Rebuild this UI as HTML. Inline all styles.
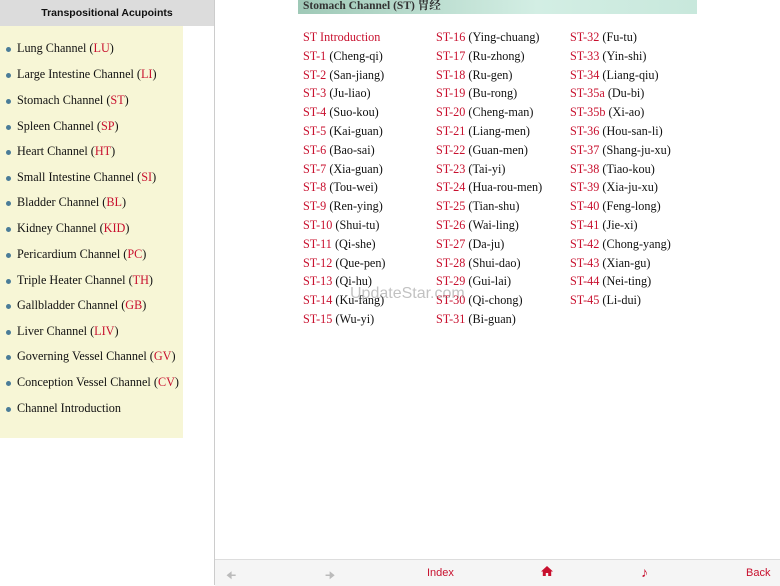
<!DOCTYPE html>
<html><head><meta charset="utf-8"><style>
body{margin:0;width:780px;height:585px;position:relative;background:#fff;font-family:"Liberation Serif",serif;overflow:hidden}
#hdr{position:absolute;left:0;top:0;width:214px;height:26px;background:#dcdcdc;font:bold 10.5px "Liberation Sans",sans-serif;text-align:center;line-height:26px;color:#111}
#side{position:absolute;left:0;top:26px;width:183px;height:412px;background:#f7f6d6}
#vline{position:absolute;left:214px;top:0;width:1px;height:585px;background:#ccc}
.si{position:absolute;left:17px;font-size:12.2px;color:#111;white-space:nowrap}
.si:before{content:"";position:absolute;left:-11px;top:6px;width:5px;height:5px;border-radius:50%;background:#4a7c98}
.r{color:#c8102e}
#ban{position:absolute;left:298px;top:0;width:399px;height:14px;background:linear-gradient(90deg,#9fc9b7,#d3eee4 60%,#c8e8dc);font:bold 11.5px "Liberation Serif","Noto Serif CJK SC",serif;color:#333;line-height:13px;padding-left:5px;box-sizing:border-box}
.c{position:absolute;font-size:12.2px;color:#111;white-space:nowrap}
#bar{position:absolute;left:215px;top:559px;width:565px;height:26px;background:#f5f5f5;border-top:1px solid #ddd;font:11px "Liberation Sans",sans-serif}
#bar span{position:absolute;top:7px}
#wm{position:absolute;left:350px;top:285px;font:16px "Liberation Sans",sans-serif;color:rgba(120,120,120,.45)}
</style></head><body>
<div id="hdr">Transpositional Acupoints</div>
<div id="side"></div>
<div id="vline"></div>
<div class="si" style="top:41px">Lung Channel (<span class="r">LU</span>)</div>
<div class="si" style="top:67px">Large Intestine Channel (<span class="r">LI</span>)</div>
<div class="si" style="top:93px">Stomach Channel (<span class="r">ST</span>)</div>
<div class="si" style="top:119px">Spleen Channel (<span class="r">SP</span>)</div>
<div class="si" style="top:144px">Heart Channel (<span class="r">HT</span>)</div>
<div class="si" style="top:170px">Small Intestine Channel (<span class="r">SI</span>)</div>
<div class="si" style="top:195px">Bladder Channel (<span class="r">BL</span>)</div>
<div class="si" style="top:221px">Kidney Channel (<span class="r">KID</span>)</div>
<div class="si" style="top:247px">Pericardium Channel (<span class="r">PC</span>)</div>
<div class="si" style="top:273px">Triple Heater Channel (<span class="r">TH</span>)</div>
<div class="si" style="top:298px">Gallbladder Channel (<span class="r">GB</span>)</div>
<div class="si" style="top:324px">Liver Channel (<span class="r">LIV</span>)</div>
<div class="si" style="top:349px">Governing Vessel Channel (<span class="r">GV</span>)</div>
<div class="si" style="top:375px">Conception Vessel Channel (<span class="r">CV</span>)</div>
<div class="si" style="top:401px">Channel Introduction</div>
<div id="ban">Stomach Channel (ST) 胃经</div>
<div id="cols"></div>
<script>
var a=[["ST Introduction",""],["ST-1","Cheng-qi"],["ST-2","San-jiang"],["ST-3","Ju-liao"],["ST-4","Suo-kou"],["ST-5","Kai-guan"],["ST-6","Bao-sai"],["ST-7","Xia-guan"],["ST-8","Tou-wei"],["ST-9","Ren-ying"],["ST-10","Shui-tu"],["ST-11","Qi-she"],["ST-12","Que-pen"],["ST-13","Qi-hu"],["ST-14","Ku-fang"],["ST-15","Wu-yi"],
["ST-16","Ying-chuang"],["ST-17","Ru-zhong"],["ST-18","Ru-gen"],["ST-19","Bu-rong"],["ST-20","Cheng-man"],["ST-21","Liang-men"],["ST-22","Guan-men"],["ST-23","Tai-yi"],["ST-24","Hua-rou-men"],["ST-25","Tian-shu"],["ST-26","Wai-ling"],["ST-27","Da-ju"],["ST-28","Shui-dao"],["ST-29","Gui-lai"],["ST-30","Qi-chong"],["ST-31","Bi-guan"],
["ST-32","Fu-tu"],["ST-33","Yin-shi"],["ST-34","Liang-qiu"],["ST-35a","Du-bi"],["ST-35b","Xi-ao"],["ST-36","Hou-san-li"],["ST-37","Shang-ju-xu"],["ST-38","Tiao-kou"],["ST-39","Xia-ju-xu"],["ST-40","Feng-long"],["ST-41","Jie-xi"],["ST-42","Chong-yang"],["ST-43","Xian-gu"],["ST-44","Nei-ting"],["ST-45","Li-dui"]];
var h="",xs=[303,436,570];
a.forEach(function(e,i){var c=i<16?0:i<32?1:2,r=i<16?i:i<32?i-16:i-32;
h+='<div class="c" style="left:'+xs[c]+'px;top:'+(30+r*18.8)+'px"><span class="r">'+e[0]+'</span>'+(e[1]?' ('+e[1]+')':'')+'</div>';});
document.getElementById("cols").innerHTML=h;
</script>
<div id="wm">UpdateStar.com</div>
<div id="bar">
<span style="left:11px;color:#bbb">&#129032;</span>
<span style="left:110px;color:#bbb">&#129034;</span>
<span style="left:212px;color:#c8102e">Index</span>
<span style="left:326px;color:#c8102e;top:5px"><svg width="12" height="12" viewBox="0 0 12 12"><path d="M6 1L0 6.5h1.8V11h3V8h2.4v3h3V6.5H12z" fill="#c8102e"/></svg></span>
<span style="left:426px;color:#c8102e;top:4px;font-size:14px">&#9834;</span>
<span style="left:531px;color:#c8102e">Back</span>
</div>
</body></html>
